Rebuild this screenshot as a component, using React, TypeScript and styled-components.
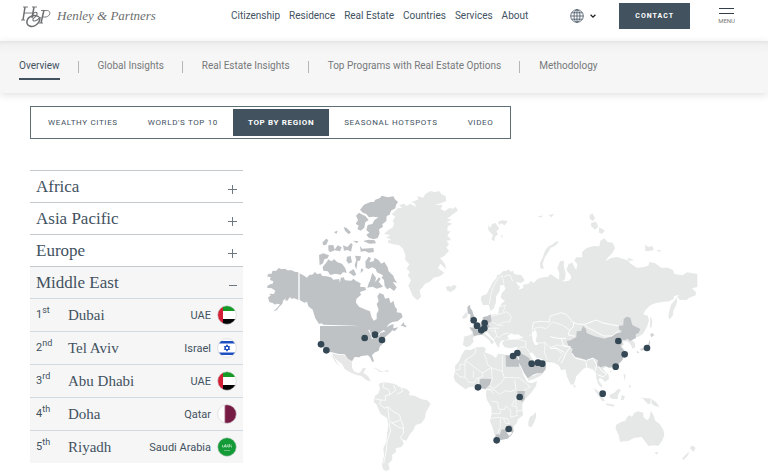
import React, { Fragment, useState } from 'react';
import styled, { createGlobalStyle } from 'styled-components';

const slate = '#42525f';
const sans = 'Roboto, "Liberation Sans", sans-serif';
const serif = '"Liberation Serif", serif';

const GlobalStyle = createGlobalStyle`
  * { box-sizing: border-box; }
  body { margin: 0; background: #fff; color: ${slate}; font-family: ${sans}; overflow-x: hidden; }
  button { font: inherit; color: inherit; background: none; border: 0; padding: 0; cursor: pointer; }
  a { color: inherit; text-decoration: none; }
`;

const Header = styled.header`
  display: flex;
  align-items: center;
  height: 41px;
  padding: 0 33px 10px 20px;
`;
const Logo = styled.a`
  display: flex;
  align-items: center;
  gap: 6px;
  width: 211px;
  color: #6c6e70;
  font: italic 13px/20px ${serif};
  white-space: nowrap;
`;
const LogoMark = styled.svg`
  width: 31px;
  height: 26px;
  flex: none;
`;
const MainNav = styled.nav`
  display: flex;
  gap: 9px;
  font-size: 10px;
  line-height: 14px;
  white-space: nowrap;
`;
const Tools = styled.div`
  display: flex;
  align-items: center;
  margin-left: auto;
`;
const Language = styled.button`
  display: flex;
  align-items: center;
  gap: 6px;
  margin-right: 23px;
`;
const Contact = styled.a`
  display: grid;
  place-items: center;
  width: 71px;
  height: 26px;
  background: ${slate};
  color: #fff;
  font-size: 7px;
  font-weight: 700;
  letter-spacing: 1px;
`;
const MenuButton = styled.button`
  && {
    display: grid;
    justify-items: center;
    gap: 1px;
    margin-left: 28px;
    font-size: 6px;
    line-height: 7px;
    color: #777;
  }
`;

const SubNav = styled.nav`
  display: flex;
  align-items: center;
  height: 52px;
  padding: 0 19px 1px;
  background: linear-gradient(#e4e5e5, #f1f1f1 4px, #f6f6f6 12px);
  box-shadow: 0 2px 8px rgba(0, 0, 0, 0.12);
  font-size: 10px;
  line-height: 14px;
  white-space: nowrap;
`;
const SubLink = styled.a<{ $active: boolean }>`
  padding: 6px 0 5px;
  border-bottom: 2px solid ${p => (p.$active ? slate : 'transparent')};
  color: ${p => (p.$active ? slate : '#77797b')};
`;
const SubDivider = styled.span`
  width: 1px;
  height: 12px;
  margin: 0 19px 0 18px;
  background: #b4b6b8;
`;

const Main = styled.main`
  padding: 13px 70px 0 30px;
`;
const Tabs = styled.div`
  display: inline-flex;
  padding: 2px;
  border: 1px solid #5f6f76;
`;
const Tab = styled.button<{ $active: boolean }>`
  && {
    height: 27px;
    padding: 0 15px;
    background: ${p => (p.$active ? slate : 'transparent')};
    color: ${p => (p.$active ? '#fff' : slate)};
    font-size: 8px;
    font-weight: ${p => (p.$active ? 700 : 400)};
    letter-spacing: 0.08em;
    white-space: nowrap;
  }
`;
const Explorer = styled.div`
  display: grid;
  grid-template-columns: 213px 1fr;
  gap: 19px;
  margin-top: 31px;
`;
const Region = styled.section<{ $open: boolean }>`
  border-top: 1px solid #c4c9ce;
  background: ${p => (p.$open ? '#f6f6f6' : 'transparent')};
`;
const RegionButton = styled.button`
  && {
    display: flex;
    align-items: center;
    justify-content: space-between;
    width: 100%;
    height: 31px;
    padding: 0 6px;
    font: 17px/24px ${serif};
  }
`;
const Cities = styled.ol`
  margin: 0;
  padding: 0;
  list-style: none;
`;
const City = styled.li`
  display: grid;
  grid-template-columns: 32px 1fr auto 20px;
  align-items: center;
  height: 33px;
  padding: 0 6px;
  border-top: 1px solid #cfdae3;
  font-size: 11px;
  white-space: nowrap;
`;
const Rank = styled.span`
  line-height: 16px;
  sup { font-size: 9px; line-height: 0; }
`;
const CityName = styled.span`
  font: 15px/20px ${serif};
`;
const Country = styled.span`
  margin-right: 6px;
`;
const MapSvg = styled.svg`
  display: block;
  width: 100%;
  margin-top: 10px;
`;

const PlusIcon = ({ open }: { open: boolean }) => (
  <svg width="9" height="24" viewBox="0 0 9 24" stroke="#6c7780" aria-hidden="true">
    <path d={open ? 'M1 14.5H9' : 'M0 14.5H9M4.5 10V19'} />
  </svg>
);

type FlagName = 'uae' | 'israel' | 'qatar' | 'saudi';
const Flag = ({ name }: { name: FlagName }) => (
  <svg width="20" height="20" viewBox="0 0 20 20" role="img" aria-label={name}>
    <clipPath id={`flag-${name}`}><circle cx="10" cy="10" r="9.3" /></clipPath>
    <g clipPath={`url(#flag-${name})`}>
      <path fill="#fff" d="M0 0h20v20H0z" />
      {name === 'uae' && <>
        <path fill="#159a25" d="M5 0h15v6H5z" /><path fill="#050505" d="M5 14h15v6H5z" /><path fill="#d21f35" d="M0 0h6v20H0z" />
      </>}
      {name === 'israel' && <>
        <path fill="#1f4fc0" d="M0 3h20v2.6H0zM0 14.4h20V17H0z" />
        <path fill="none" stroke="#1f4fc0" strokeWidth="1" d="M10 6.8l2.7 4.7H7.3zM10 13.2L7.3 8.5h5.4z" />
      </>}
      {name === 'qatar' && <path fill="#761b43" d="M20 0H7l1.7 1L7 2l1.7 1L7 4l1.7 1L7 6l1.7 1L7 8l1.7 1L7 10l1.7 1L7 12l1.7 1L7 14l1.7 1L7 16l1.7 1L7 18l1.7 1L7 20h13z" />}
      {name === 'saudi' && <>
        <path fill="#129b36" d="M0 0h20v20H0z" />
        <path fill="none" stroke="#e5f6e8" strokeWidth=".6" d="M5.5 8v2h2V8M8.5 7v3h1.5V8M11 7v3h1.5V7M14 7.5V10h1" />
        <path fill="none" stroke="#9fd9ac" strokeWidth=".6" d="M7 13.5h6" />
      </>}
    </g>
    <circle cx="10" cy="10" r="9.3" fill="none" stroke="#cfd1d3" strokeWidth=".6" />
  </svg>
);

const cities: { rank: string; suffix: string; name: string; country: string; flag: FlagName }[] = [
  { rank: '1', suffix: 'st', name: 'Dubai', country: 'UAE', flag: 'uae' },
  { rank: '2', suffix: 'nd', name: 'Tel Aviv', country: 'Israel', flag: 'israel' },
  { rank: '3', suffix: 'rd', name: 'Abu Dhabi', country: 'UAE', flag: 'uae' },
  { rank: '4', suffix: 'th', name: 'Doha', country: 'Qatar', flag: 'qatar' },
  { rank: '5', suffix: 'th', name: 'Riyadh', country: 'Saudi Arabia', flag: 'saudi' },
];

const markers: [number, number][] = [
  [183, 493], [199, 511], [314, 474], [345, 464], [366, 480],
  [641, 421], [651, 437], [674, 429], [673, 445], [664, 451],
  [759, 528], [772, 519], [815, 551], [834, 548], [847, 551],
  [654, 622], [779, 651], [746, 747], [710, 781],
  [1075, 483], [1094, 523], [1067, 560], [1161, 504], [1028, 641],
];

const WorldMap = () => (
  <MapSvg viewBox="6 0 1308 873" role="img" aria-label="World map of top cities">
    <g fill="#bec2c5">
      <path d="M22 318L30 313 38 311 40 304 30 300 32 292 21 289 26 281 35 281 37 273 49 272 56 264 65 268 75 266 82 271 95 271 104 275 115 277V360L103 355 94 356 90 351 82 362 75 361 78 354 69 362 67 371 58 380 51 390 40 394 52 383 60 373 50 371 45 374 38 369 28 366 24 352 32 347 28 341 42 342 46 332 35 325 22 324Z" />
      <path d="M119 280L134 288 140 293 149 284 157 284 165 276 172 283 181 280 187 288 200 289 213 292 220 299 237 297 240 308 242 293 251 292 255 301 274 302 280 296 288 303 302 310 300 320 316 322 318 330 300 336 303 344 289 357 288 368 297 380 314 388 330 394 334 410 341 422 350 417 350 402 356 390 350 372 356 363 352 349 359 339 371 344 375 356 387 353 392 370 400 362 405 380 411 388 410 397 424 399 428 411 413 424 397 426 387 432 379 442 393 434 401 433 400 445 415 442 405 453 392 450 380 456 370 450 355 462 333 463 329 450 304 446 285 437 190 434 184 430 177 432 166 415 158 389 145 379 141 365 133 368 119 360Z" />
      <path d="M422 437L432 426 433 434 440 438 437 442 430 439Z" />
      <path d="M300 89L312 74 331 66 342 66 346 59 360 54 365 47 384 52 400 49 405 58 414 66 408 75 406 85 393 92 389 104 380 108 379 123 367 133 369 140 357 148 359 160 353 174 341 178 326 173 319 164 328 158 319 150 323 135 337 132 343 121 355 112 339 110 327 112 318 101 309 99Z" />
      <path d="M288 107L297 98 309 105 316 108 326 120 316 127 313 143 302 152 292 147 296 137 287 131 294 120Z" />
      <path d="M177 225L190 220 207 226 203 235 193 238 189 250 179 256ZM188 261L202 244 204 238 214 244 223 238 232 247 246 251 256 265 260 278 249 277 242 284 226 281 211 285 203 274 190 272ZM187 188L198 176 205 180 199 194 190 196ZM205 196L220 195 224 209 233 196 245 202 240 214 224 211 210 217 205 210ZM222 156L233 152 229 162ZM251 141L260 144 273 157 266 163 255 152ZM249 196L262 201 273 189 278 193 273 215 263 210 252 212ZM261 230L272 228 276 247 266 251 259 242ZM285 227L303 229 300 242 293 242 289 269 284 256 289 240ZM279 182L296 184 290 190ZM309 183L326 179 344 181 348 190 329 191ZM300 197L306 206 340 204 342 216 326 218 315 213 302 215ZM266 277L281 267 289 284 281 288ZM316 245L326 230 333 235 328 246 341 244 344 233 356 241 364 251 373 246 383 262 386 274 400 287 403 296 411 308 398 306 410 322 402 333 390 323 381 328 374 318 372 300 365 293 369 286 351 277 347 267 337 262 325 267 317 263ZM303 265L311 269 302 280ZM337 278L348 294 345 307 357 292 362 297 356 305 369 320 350 326 338 320 322 323 326 310 330 302Z" />
      <path d="M180 438H285L308 445 323 447 333 466 336 478 348 466 357 468 360 460 377 454 387 443 399 447 393 456 385 463 373 474 373 486 359 500 356 512 343 518 336 526 342 544 337 546 330 532 324 526 303 528 299 532 284 531 276 544 264 537 254 523 236 522 216 517 200 516 187 498 180 487 180 464Z" />
      <path fill="#e7e7e7" d="M216 520L235 525 252 525 262 534 276 546 276 563 284 576 297 579 304 573 309 563 318 565 312 575 308 580 326 590 325 603 315 597 305 588 290 585 273 578 254 567 246 552 234 543 221 531ZM208 518L223 534 231 547 239 561 224 544 218 532ZM338 563L352 566 360 572 374 574 360 576 348 568ZM376 570L389 573 377 577Z" />
    </g>
    <g transform="translate(360 0)" fill="#e6e7e7">
      <path d="M12 161L26 149 39 142 42 130 38 122 46 110 35 103 54 84 66 84 57 75 73 71 80 78 91 71 109 82 103 69 93 67 116 58 111 48 130 53 136 42 151 33 166 37 177 33 185 43 197 49 199 63 184 69 164 75 188 74 182 87 194 94 208 84 219 86 228 80 233 93 218 103 202 116 216 119 200 126 217 131 203 139 202 153 212 154 202 166 213 180 199 182 207 191 199 203 207 212 193 228 180 234 195 252 199 268 181 251 174 265 193 278 180 289 161 293 149 305 135 311 128 322 119 330 123 350 112 361 98 348 91 331 85 318 93 301 83 286 90 276 80 266 88 253 76 240 76 224 69 206 57 195 39 193 24 188 24 181 35 181 19 172 31 166ZM198 321L205 318 214 320 221 314 230 319 225 328 212 336 201 332ZM325 134L331 144 336 132 347 129 358 147 349 153 354 163 345 171 343 184 334 178 339 166 325 151ZM354 125L366 121 383 123 374 136 363 130 357 135ZM365 163L369 173 363 171Z" />
      <path d="M302 358L305 348 320 342 331 321 339 305 350 293 351 285 359 284 370 273 380 272 386 268 392 275 399 272 403 282 424 286 434 301 424 309 408 306 415 319 406 330 403 347 394 358 375 363 362 353 365 340 376 328 372 314 361 316 359 333 348 350 348 366 341 386 332 393 326 374 309 376Z" />
      <path fill="none" stroke="#fff" strokeWidth="2" d="M328 372L332 345 340 320 352 298 366 286 372 312M372 290L390 284 398 304" />
    </g>
    <g transform="translate(780 0)" fill="#e6e7e7">
      <path d="M-30 352L-27 335-28 320-10 313 0 320-4 329 10 324 9 314 26 311 33 302 41 309 53 296 70 292 84 290 91 282 105 291 117 300 118 280 112 264 120 244 132 242 131 258 137 279 135 298 126 305 146 302 154 295 152 286 139 270 146 252 157 248 164 263 169 270 172 253 163 241 169 232 187 232 186 217 200 204 221 198 238 199 241 182 253 175 263 186 278 188 285 204 277 219 263 233 257 243 273 234 291 231 308 236 325 242 332 251 351 263 369 262 385 257 388 246 405 250 424 263 444 263 459 270 463 282 488 286 501 277 532 282 532 321 516 325 528 337 527 346 508 353 499 360 480 360 471 350 471 365 467 379 460 392 459 405 449 419 445 408 448 394 453 374 472 352 477 345 462 348 461 356 448 364 430 365 408 369 391 376 376 391 370 403 383 407 387 421 381 440 369 461 356 470 343 472 334 478 345 490 346 502 338 506 330 491 321 484 308 485 312 493 306 501 316 512 314 527 306 541 293 554 274 563 257 561 248 566 266 584 267 597 255 606 247 597 239 593 236 601 247 617 245 622 236 615 229 597 228 580 218 568 202 563 187 569 169 589 162 613 152 614 141 590 136 568 124 571 116 556 101 548 77 546 65 536 49 533 36 517 28 521 41 542 26 537 9 522-8 521-8 500-28 505-47 501-54 488-45 480-57 482-62 493-62 503-68 499-80 477-98 457-107 459-90 474-78 485-84 494-93 480-113 464-130 467-142 474-139 485-150 498-160 502-171 495-169 470-150 465-142 460-152 445-137 438-126 437-106 410-88 404-65 401-63 383-54 369Z" />
      <path d="M61 265L60 249 69 230 75 212 84 200 98 193 110 184 117 186 105 198 92 203 84 218 75 231 71 242 68 253 72 266ZM210 118L208 107 217 99 225 115 220 123ZM214 128L228 125 235 140 225 149 213 138ZM238 142L255 152 245 162 236 157ZM375 195L385 201 397 198 401 210 389 213 376 213ZM409 210L423 211 419 217ZM321 234L333 236 342 240 327 243ZM391 408L397 422 395 442 390 443ZM52 109L62 108 68 105 64 113ZM85 106L102 101 95 112Z" />
      <path fill="#fff" d="M-37 467L-25 460-17 464-5 463 11 474-10 477-27 479-35 475ZM35 457L46 451 51 466 47 482 55 494 45 495 38 481Z" />
      <path fill="none" stroke="#fff" strokeWidth="2.4" d="M36 452L40 428 60 424 88 426 90 408 124 398 140 404 160 428 172 432" />
    </g>
    <g transform="translate(540 360)">
      <g fill="#e6e7e7">
        <path d="M75 149L91 150 110 142 130 140 138 147 134 157 157 166 168 174 174 161 191 163 209 168 228 168 234 181 238 193 246 211 250 225 262 246 274 250 291 243 288 258 274 278 256 296 247 313 247 331 250 345 234 358 230 370 220 380 220 395 208 410 193 417 175 423 167 414 158 385 150 363 155 341 154 322 141 300 138 287 139 269 132 267 119 257 100 260 86 262 77 268 60 256 46 244 41 232 46 211 45 198 58 182 64 166ZM270 350L281 344 286 335 289 349 283 366 274 382 265 378 265 365ZM263 231L284 226 300 215 310 219 301 228 280 238 265 242ZM66 52L78 37 84 42 80 53 70 57Z" />
      </g>
      <g fill="#bec2c5">
        <path d="M82 21L90 14 91 24 97 32 100 43 108 57 104 66 90 71 97 63 90 54 92 44 83 40ZM88 82L101 84 110 75 125 75 133 87 128 105 112 105 101 109 98 94ZM129 51L142 49 151 43 155 64 144 71 150 82 131 81 126 68ZM197 165L212 168 230 168 236 180 237 200H198ZM238 176L234 168 243 160 258 168 267 174 275 188 285 194 306 198 318 195 317 208 308 219 293 219 279 224 263 235 252 218 243 199 235 186ZM118 244L122 236 154 237 151 253 135 267 123 265 117 259ZM232 273H255L253 287 255 296 246 306 231 292ZM165 415L168 403 180 404 184 389 199 388 210 374 217 379 221 392 215 404 203 416 183 420 171 424Z" />
        <path fill="#fff" d="M200 396L211 390 216 400 207 408Z" />
      </g>
      <path fill="none" stroke="#fff" strokeWidth="2" d="M108 145L105 162 75 181 75 193 60 193 59 209 46 210M75 181L108 205 127 219 153 203 143 194 138 174 131 160M153 203L187 214V166M187 214L192 232 239 234M127 219V231L110 235 102 248 85 246 77 232 59 230 46 217M75 193V231M100 213V234M115 234L118 255M154 203L157 235 149 260 162 265 185 247 193 233M139 269L163 270 178 283 197 272 211 275 228 269 224 240M239 234L256 249 271 260 251 272M154 304L173 306 176 326 193 329 198 318 212 330 212 351 234 346M153 341H181L181 328M153 355L174 352 203 356 209 370M181 355V382L173 399M190 354L197 370 209 371M227 292L228 320 215 317 222 301M231 333L246 331M231 320L230 343M138 270L149 267 160 280M72 110L67 135M101 109L115 114M155 65L176 76 190 77M128 86L145 86 163 84 177 85M155 48L180 42 200 35 214 49 210 65 191 66 175 74M164 84L170 108 178 113 190 102 206 99M170 108L160 120M199 120L219 116 242 120 258 124 257 140 240 142 233 150M268 107L290 99 282 85 303 81 318 86 337 66 367 75 390 91M280 125L299 130 315 127 330 143 352 135 382 139M256 140L267 155 278 172M316 127L313 156 321 179M342 140L358 155 368 163 354 184M180 20L196 15 190 35M154 92L167 94" />
    </g>
    <g transform="translate(120 420)">
      <path fill="#e6e7e7" d="M236 191L251 187 267 189 285 192 300 202 320 207 330 217 326 225 344 227 363 237 382 241 392 252 385 264 377 278 375 295 364 310 347 315 340 331 328 345 319 362 307 358 311 371 304 381 287 385 288 396 276 405 277 419 265 431 269 448 259 453 250 449 246 435 252 407 250 385 259 365 261 345 265 314 261 294 242 282 229 253 221 245 226 226 235 221 240 207ZM180 160L190 158 203 168 213 184 205 182 193 172Z" />
      <path fill="none" stroke="#fff" strokeWidth="2.4" d="M252 188L248 202 266 208 270 224 256 227 257 241 243 240 226 237M270 224L287 211 281 194M291 222L308 214 304 202M243 241L239 252 253 264 265 261 280 275 299 285 303 300 310 319 311 339 301 351M264 263L267 298 275 309 299 301M275 309L297 322 311 325M267 307L272 333 261 365 259 393 251 430M301 351L307 361" />
    </g>
    <g transform="translate(870 360)">
      <path fill="#e6e7e7" d="M198 375L215 365 225 363 232 350 239 346 246 351 252 340 263 334 280 338 280 350 291 361 298 354 303 332 311 347 316 362 329 372 340 389 343 405 337 421 326 437 310 436 296 438 287 427 275 411 251 414 235 423 210 425 206 405 197 387ZM314 456L325 457 320 465ZM423 437L430 438 437 444 430 455 421 446ZM419 454L413 467 400 480 396 476 407 464ZM179 284L192 279 205 266 213 270 204 284 203 297 189 297 181 294ZM130 264L142 271 154 286 165 302 157 304 142 283ZM168 310L193 314 192 320 169 315ZM264 289L275 293 288 295 302 295 318 306 329 321 313 317 305 311 294 312 280 297ZM215 285L225 289 220 301 213 300ZM221 221L227 225 224 241 231 247 222 238ZM239 253L244 260 237 264ZM178 215L187 210 183 217ZM69 253L78 259 73 263Z" />
      <path fill="#bec2c5" d="M50 123L62 121 79 111 80 94 93 93 99 78 108 87 110 99 133 109 164 116 187 108 194 101 211 98 216 92 208 89 206 78 220 76 221 57 230 50 241 53 247 75 271 87 266 99 257 103 258 114 240 123 233 116 225 120 214 119 217 131 211 138 223 153 225 165 215 183 198 198 177 203 166 197 152 202 141 196 144 181 130 173 109 180 91 174 75 170 65 158 68 146 55 137Z" />
      <path fill="#d1d3d4" d="M300 103L307 99 313 106 304 112ZM298 119L301 128 296 144 287 148 275 152 269 148 285 142 295 132ZM260 153L268 157 262 160Z" />
      <path fill="none" stroke="#fff" strokeWidth="3" d="M103 73L123 66 139 60 159 69 186 74 206 78M72 65L70 80 58 92 55 105 75 109M82 72L103 73L113 83 135 94 160 108 186 108 207 92M0 110L23 115 49 115M34 115L41 138 61 140 47 160 41 177 33 190M0 145L22 145 43 158M65 159L77 175 107 182 111 203 99 208M111 181L129 174 140 194 136 212 132 220M146 200L156 214 170 221 160 231 143 224M303 289V315" />
    </g>
    <g fill="#344754">
      {markers.map(([cx, cy]) => <circle key={`${cx}-${cy}`} cx={cx} cy={cy} r="10" />)}
    </g>
  </MapSvg>
);

const tabs = ['WEALTHY CITIES', "WORLD'S TOP 10", 'TOP BY REGION', 'SEASONAL HOTSPOTS', 'VIDEO'];
const regions = ['Africa', 'Asia Pacific', 'Europe', 'Middle East'];
const mainLinks = ['Citizenship', 'Residence', 'Real Estate', 'Countries', 'Services', 'About'];
const subLinks = ['Overview', 'Global Insights', 'Real Estate Insights', 'Top Programs with Real Estate Options', 'Methodology'];

export default function App() {
  const [tab, setTab] = useState('TOP BY REGION');
  const [openRegion, setOpenRegion] = useState('Middle East');
  return (
    <>
      <GlobalStyle />
      <Header>
        <Logo href="#">
          <LogoMark viewBox="0 0 31 26" fill="none" stroke="currentColor" aria-hidden="true">
            <path strokeWidth="1.5" d="M5 4L3 17M14 4L12 15M24 7L21 20" />
            <path strokeWidth=".9" d="M3 4H8M1 17H5M12 4H17M4 10H13M19 20H23M21 7.5H26C32 7 31 15 23 14" />
            <path strokeWidth="1.5" d="M19 14C15 11 8 13 7 18C6 23 12 25 16 22C19 20 20 17 20 14" />
            <path strokeWidth="1.1" d="M20 14C17 19 12 19 13 16C14 14 18 13 17 10C16 8 12 10 13 13" />
          </LogoMark>
          <span>Henley &amp; Partners</span>
        </Logo>
        <MainNav aria-label="Main">
          {mainLinks.map(link => <a key={link} href="#">{link}</a>)}
        </MainNav>
        <Tools>
          <Language aria-label="Language">
            <svg width="14" height="14" viewBox="0 0 14 14" fill="none" stroke={slate} strokeWidth=".8">
              <circle cx="7" cy="7" r="6.3" /><ellipse cx="7" cy="7" rx="3" ry="6.3" /><path d="M7 .7V13.3M.7 7H13.3M1.6 3.8H12.4M1.6 10.2H12.4" />
            </svg>
            <svg width="6" height="6" viewBox="0 0 6 6" fill="none" stroke="#222" strokeWidth="1.3"><path d="M.6 1.8L3 4.2 5.4 1.8" /></svg>
          </Language>
          <Contact href="#">CONTACT</Contact>
          <MenuButton>
            <svg width="15" height="9" viewBox="0 0 15 9" stroke="#333f48" aria-hidden="true"><path d="M0 1.5H15M0 6.5H15" /></svg>
            MENU
          </MenuButton>
        </Tools>
      </Header>
      <SubNav aria-label="Section">
        {subLinks.map((link, i) => (
          <Fragment key={link}>
            {i > 0 && <SubDivider aria-hidden="true" />}
            <SubLink href="#" $active={i === 0}>{link}</SubLink>
          </Fragment>
        ))}
      </SubNav>
      <Main>
        <Tabs role="tablist">
          {tabs.map(name => (
            <Tab key={name} role="tab" aria-selected={tab === name} $active={tab === name} onClick={() => setTab(name)}>{name}</Tab>
          ))}
        </Tabs>
        <Explorer>
          <div>
            {regions.map(region => {
              const open = region === openRegion;
              return (
                <Region key={region} $open={open}>
                  <RegionButton aria-expanded={open} onClick={() => setOpenRegion(open ? '' : region)}>
                    {region}<PlusIcon open={open} />
                  </RegionButton>
                  {open && region === 'Middle East' && (
                    <Cities>
                      {cities.map(city => (
                        <City key={city.name}>
                          <Rank>{city.rank}<sup>{city.suffix}</sup></Rank>
                          <CityName>{city.name}</CityName>
                          <Country>{city.country}</Country>
                          <Flag name={city.flag} />
                        </City>
                      ))}
                    </Cities>
                  )}
                </Region>
              );
            })}
          </div>
          <WorldMap />
        </Explorer>
      </Main>
    </>
  );
}
